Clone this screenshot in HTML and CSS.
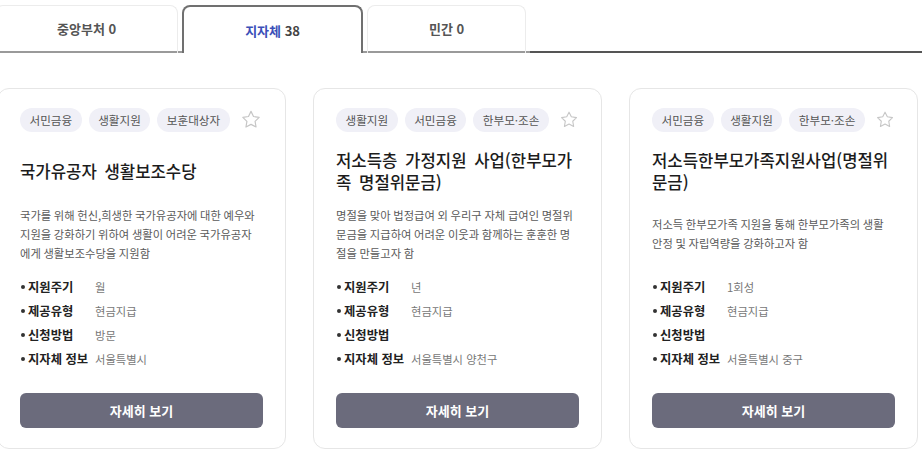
FILE: index.html
```html
<!DOCTYPE html>
<html lang="ko">
<head>
<meta charset="utf-8">
<title>지원사업</title>
<link rel="stylesheet" href="styles.css">
</head>
<body>
<div class="page">
  <div class="tabs">
    <div class="tab">중앙부처 0</div>
    <div class="tab tab-active"><span class="tab-name">지자체</span>&nbsp;38</div>
    <div class="tab">민간 0</div>
    <div class="tab-fill"></div>
  </div>

  <div class="cards">
    <div class="card">
      <div class="tags">
        <span class="tag">서민금융</span>
        <span class="tag">생활지원</span>
        <span class="tag">보훈대상자</span>
        <svg class="star" viewBox="0 0 24 24"><path d="M12 2.6l2.75 5.6 6.15.95-4.45 4.35 1.05 6.15L12 16.75l-5.5 2.9 1.05-6.15L3.1 9.15l6.15-.95z"/></svg>
      </div>
      <div class="title"><h3>국가유공자 생활보조수당</h3></div>
      <div class="desc"><p>국가를 위해 헌신,희생한 국가유공자에 대한 예우와 지원을 강화하기 위하여 생활이 어려운 국가유공자에게 생활보조수당을 지원함</p></div>
      <ul class="info">
        <li><span class="label">지원주기</span><span class="value">월</span></li>
        <li><span class="label">제공유형</span><span class="value">현금지급</span></li>
        <li><span class="label">신청방법</span><span class="value">방문</span></li>
        <li><span class="label">지자체 정보</span><span class="value">서울특별시</span></li>
      </ul>
      <button class="btn">자세히 보기</button>
    </div>

    <div class="card">
      <div class="tags">
        <span class="tag">생활지원</span>
        <span class="tag">서민금융</span>
        <span class="tag">한부모·조손</span>
        <svg class="star" viewBox="0 0 24 24"><path d="M12 2.6l2.75 5.6 6.15.95-4.45 4.35 1.05 6.15L12 16.75l-5.5 2.9 1.05-6.15L3.1 9.15l6.15-.95z"/></svg>
      </div>
      <div class="title"><h3>저소득층 가정지원 사업(한부모가족 명절위문금)</h3></div>
      <div class="desc"><p>명절을 맞아 법정급여 외 우리구 자체 급여인 명절위문금을 지급하여 어려운 이웃과 함께하는 훈훈한 명절을 만들고자 함</p></div>
      <ul class="info">
        <li><span class="label">지원주기</span><span class="value">년</span></li>
        <li><span class="label">제공유형</span><span class="value">현금지급</span></li>
        <li><span class="label">신청방법</span><span class="value"></span></li>
        <li><span class="label">지자체 정보</span><span class="value">서울특별시 양천구</span></li>
      </ul>
      <button class="btn">자세히 보기</button>
    </div>

    <div class="card">
      <div class="tags">
        <span class="tag">서민금융</span>
        <span class="tag">생활지원</span>
        <span class="tag">한부모·조손</span>
        <svg class="star" viewBox="0 0 24 24"><path d="M12 2.6l2.75 5.6 6.15.95-4.45 4.35 1.05 6.15L12 16.75l-5.5 2.9 1.05-6.15L3.1 9.15l6.15-.95z"/></svg>
      </div>
      <div class="title"><h3>저소득한부모가족지원사업(명절위문금)</h3></div>
      <div class="desc"><p>저소득 한부모가족 지원을 통해 한부모가족의 생활 안정 및 자립역량을 강화하고자 함</p></div>
      <ul class="info">
        <li><span class="label">지원주기</span><span class="value">1회성</span></li>
        <li><span class="label">제공유형</span><span class="value">현금지급</span></li>
        <li><span class="label">신청방법</span><span class="value"></span></li>
        <li><span class="label">지자체 정보</span><span class="value">서울특별시 중구</span></li>
      </ul>
      <button class="btn">자세히 보기</button>
    </div>
  </div>
</div>
</body>
</html>
```

FILE: styles.css
```css
* { box-sizing: border-box; }

html, body {
  margin: 0;
  padding: 0;
  background: #ffffff;
  overflow: hidden;
}

body {
  font-family: "Noto Sans CJK KR", "Noto Sans", sans-serif;
  color: #222;
}

.page {
  margin-left: -5px;
  width: 932px;
}

/* Tabs */
.tabs {
  display: flex;
  gap: 4px;
  height: 53px;
  padding-top: 5px;
  box-shadow: inset 0 -2px 0 #9a9a9a;
}

.tab {
  display: flex;
  align-items: center;
  justify-content: center;
  padding: 0 61px 2px;
  border: 1px solid #ececec;
  border-bottom: none;
  border-radius: 8px 8px 0 0;
  font-size: 13px;
  font-weight: 700;
  color: #555;
  white-space: nowrap;
}

.tab-active {
  border: 2px solid #707070;
  border-bottom: none;
  background: #fff;
  color: #444;
  padding-bottom: 0;
}

.tab-name {
  color: #3b4fb8;
}

.tab-fill {
  flex: 1;
  border-bottom: 2px solid #555;
}

/* Cards */
.cards {
  display: grid;
  grid-template-columns: repeat(3, 289px);
  column-gap: 27px;
  margin-top: 35px;
  padding-left: 2px;
}

.card {
  border: 1px solid #e6e6e6;
  border-radius: 12px;
  padding: 19px 22px 19px;
  height: 361px;
  display: flex;
  flex-direction: column;
  background: #fff;
}

.tags {
  display: flex;
  align-items: center;
  gap: 7px;
  height: 24px;
}

.tag {
  height: 24px;
  line-height: 24px;
  padding: 0 9.5px;
  border-radius: 12px;
  background: #f0f0f7;
  color: #555;
  font-size: 11.6px;
  white-space: nowrap;
}

.star {
  width: 22px;
  height: 22px;
  margin-left: 3px;
  fill: none;
  stroke: #c6c6c6;
  stroke-width: 1.3;
  stroke-linejoin: round;
}

.title {
  height: 62px;
  margin-top: 8px;
  margin-right: -2px;
  display: flex;
  align-items: center;
}

.title h3 {
  margin: 0;
  font-size: 16.7px;
  font-weight: 500;
  line-height: 22px;
  word-spacing: 3px;
  color: #1c1c1c;
}

.desc {
  height: 64px;
  padding-right: 2px;
  display: flex;
  align-items: center;
}

.desc p {
  margin: 0;
  font-size: 11.3px;
  line-height: 19px;
  word-spacing: -0.5px;
  color: #5a5a5a;
}

.info {
  list-style: none;
  margin: 9px 0 0;
  padding: 0;
}

.info li {
  display: flex;
  align-items: center;
  height: 24px;
}

.label {
  position: relative;
  width: 75px;
  padding-left: 8px;
  font-size: 12.3px;
  font-weight: 700;
  color: #222;
  white-space: nowrap;
}

.label::before {
  content: "";
  position: absolute;
  left: 1px;
  top: 50%;
  width: 4px;
  height: 4px;
  margin-top: -2px;
  border-radius: 50%;
  background: #333;
}

.value {
  font-size: 11.3px;
  color: #777;
}

.btn {
  margin-top: 22px;
  height: 35px;
  width: 100%;
  border: none;
  border-radius: 6px;
  background: #6b6b7c;
  color: #fff;
  font-family: inherit;
  font-size: 13px;
  font-weight: 700;
}
```
